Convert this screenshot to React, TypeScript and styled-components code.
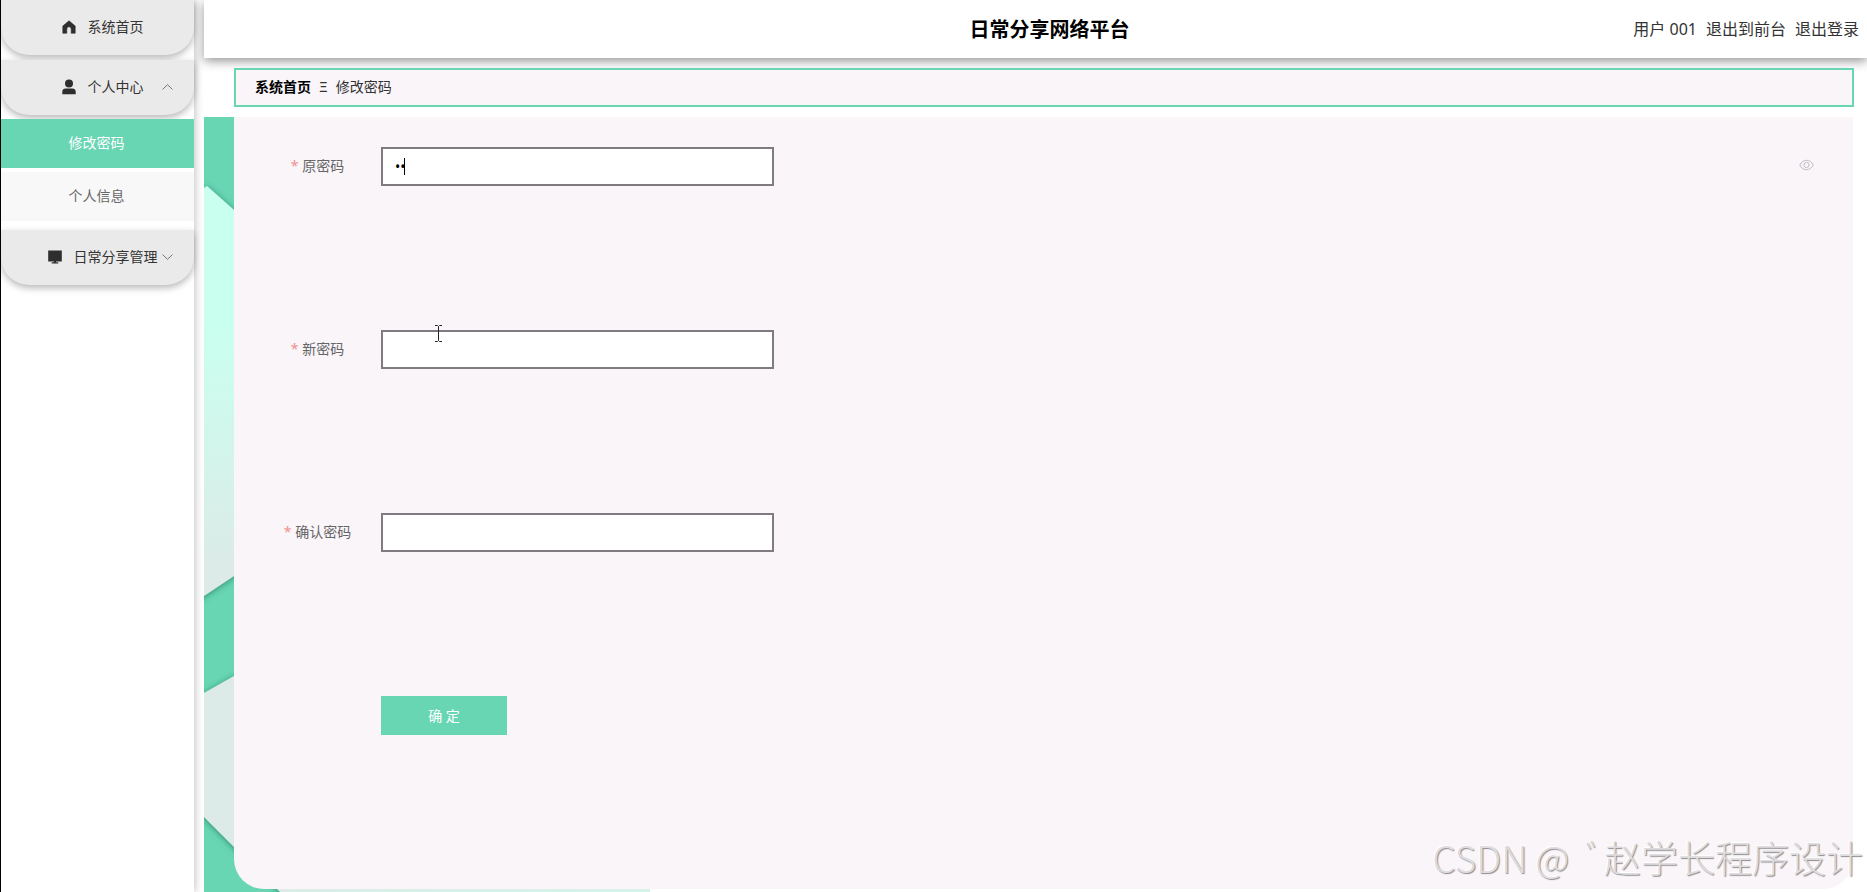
import React, { useState } from "react";
import styled, { createGlobalStyle } from "styled-components";

const green = "#68d5b3";

const GlobalStyle = createGlobalStyle`
  * { box-sizing: border-box; }
  body {
    margin: 0;
    background: #fff;
    color: #333;
    font: 14px/20px "Noto Sans", "Noto Sans CJK SC", sans-serif;
  }
  button, input { font: inherit; color: inherit; }
  a { color: inherit; text-decoration: none; }
`;

const Page = styled.div`
  position: relative;
  display: flex;
  gap: 10px;
  min-height: 100vh;
  overflow: hidden;
  border-left: 1px solid #000;
`;

const Sidebar = styled.nav`
  flex: 0 0 193px;
  background: #fff;
  box-shadow: 1px 0 8px rgba(0, 0, 0, 0.25);
`;

const MenuButton = styled.button<{ $gap: number }>`
  position: relative;
  display: flex;
  align-items: center;
  justify-content: center;
  gap: 12px;
  width: 100%;
  height: 55px;
  margin: 0 0 ${(p) => p.$gap}px;
  padding: 0 0 2px 10px;
  border: 0;
  border-radius: 0 0 28px 28px;
  background: #ebeaeb;
  box-shadow: 0 3px 7px rgba(0, 0, 0, 0.28);
  cursor: pointer;
`;

const Arrow = styled.svg`
  position: absolute;
  right: 21px;
  width: 11px;
  height: 6px;
  fill: none;
  stroke: #777;
`;

const SubMenu = styled.div`
  display: flex;
  flex-direction: column;
  gap: 4px;
  padding-bottom: 9px;
  position: relative;
  background: #fff;
`;

const SubLink = styled.a<{ $active?: boolean }>`
  height: 49px;
  padding-right: 2px;
  line-height: 47px;
  text-align: center;
  color: ${(p) => (p.$active ? "#fff" : "#666")};
  background: ${(p) => (p.$active ? green : "#f8f8f8")};
`;

const Main = styled.div`
  flex: 1;
  min-width: 0;
  display: flex;
  flex-direction: column;
`;

const Header = styled.header`
  display: grid;
  grid-template-columns: 1fr auto 1fr;
  align-items: center;
  height: 58px;
  padding: 0 8px;
  box-shadow: 0 3px 10px rgba(0, 0, 0, 0.42);
  background: #fff;
`;

const Title = styled.h1`
  grid-column: 2;
  margin: 0;
  padding: 2px 0 0 28px;
  font-size: 20px;
  line-height: 28px;
  color: #000;
`;

const UserBar = styled.div`
  display: flex;
  justify-content: flex-end;
  gap: 9px;
  font-size: 16px;
  line-height: 24px;
`;

const Breadcrumb = styled.nav`
  display: flex;
  align-items: center;
  gap: 8px;
  height: 39px;
  margin: 10px 13px 10px 30px;
  padding: 0 19px 2px;
  border: 2px solid ${green};
  background: #f9f5f9;
  position: relative;
`;

const Home = styled.a`
  font-weight: 700;
  color: #000;
`;

const Stage = styled.main`
  position: relative;
  flex: 1;
  display: flex;
  padding: 0 14px 3px 30px;
`;

const Backdrop = styled.svg`
  position: absolute;
  left: 0;
  top: 0;
  width: 446px;
  height: 100%;
`;

const Form = styled.form`
  position: relative;
  flex: 1;
  display: flex;
  flex-direction: column;
  gap: 144px;
  padding: 30px 39px 30px 20px;
  border-radius: 0 0 30px 30px;
  background: #f9f5f9;
`;

const Row = styled.div`
  display: flex;
  align-items: center;
  height: 39px;
`;

const Label = styled.label`
  flex: 0 0 127px;
  padding-bottom: 2px;
  text-align: center;
  color: #666;
`;

const Star = styled.span`
  margin-right: 4px;
  color: #f29090;
`;

const Field = styled.div`
  position: relative;
  flex: 0 1 393px;
`;

const Input = styled.input`
  display: block;
  width: 100%;
  height: 39px;
  padding: 0 12px 1px;
  border: 2px solid #807b80;
  border-radius: 0;
  background: #fff;
  color: #000;
  outline: none;
`;

const Caret = styled.span`
  position: absolute;
  left: 23px;
  top: 11px;
  width: 1px;
  height: 17px;
  background: #000;
`;

const Pointer = styled.svg`
  position: absolute;
  left: 53px;
  top: -5px;
  width: 9px;
  height: 17px;
  fill: none;
  stroke: #222;
  stroke-width: 1;
`;

const EyeButton = styled.button`
  display: flex;
  margin-left: auto;
  padding: 0 0 3px;
  border: 0;
  background: none;
  cursor: pointer;
`;

const Submit = styled.button`
  width: 126px;
  height: 39px;
  margin-left: 127px;
  padding: 0;
  border: 0;
  color: #fff;
  background: ${green};
  cursor: pointer;
`;

const Watermark = styled.div`
  position: absolute;
  right: 4px;
  bottom: 8px;
  font: 300 37px/54px "Noto Sans CJK SC", sans-serif;
  color: #dedcde;
  text-shadow: 1px 1px 1px #8e8c8e, -1px -1px 1px #fff;
  white-space: pre;
  pointer-events: none;
`;

const HomeIcon = () => (
  <svg width="14" height="14" viewBox="0 0 14 14" fill="#2e2e2e" aria-hidden="true">
    <path d="M7 .8 13.2 6v7.2H9.2V9a2.2 2.2 0 0 0-4.4 0v4.2H.8V6Z" stroke="#2e2e2e" strokeWidth=".6" strokeLinejoin="round" />
  </svg>
);

const UserIcon = () => (
  <svg width="14" height="16" viewBox="0 0 14 16" fill="#2e2e2e" aria-hidden="true">
    <circle cx="7" cy="4.6" r="4" />
    <path d="M.3 15.2v-2.4c0-2 1.5-3.2 3.4-3.2h6.6c1.900 0 3.400 1.200 3.400 3.200v2.400Z" />
  </svg>
);

const MonitorIcon = () => (
  <svg width="14" height="14" viewBox="0 0 14 14" fill="#2e2e2e" aria-hidden="true">
    <path d="M.2.600h13.600v10.800H.2ZM6 11.300h2v.9h2.300v1.300H3.700v-1.300H6Z" />
  </svg>
);

const Fold = ({ open }: { open?: boolean }) => (
  <Arrow viewBox="0 0 11 6" aria-hidden="true">
    <path d={open ? "M.5 5.500 5.500.700 10.500 5.500" : "M.5.500 5.500 5.300 10.500.500"} />
  </Arrow>
);

const EyeIcon = () => (
  <svg width="15" height="12" viewBox="0 0 15 12" fill="none" stroke="#c0bcc3" aria-hidden="true">
    <path d="M.7 6C2.300 3 4.600 1.300 7.500 1.300S12.700 3 14.300 6C12.700 9 10.400 10.700 7.500 10.700S2.300 9 .7 6Z" />
    <circle cx="7.500" cy="6" r="2.600" />
  </svg>
);

const Ribbons = () => (
  <Backdrop aria-hidden="true">
    <defs>
      <linearGradient id="mint" gradientUnits="userSpaceOnUse" x1="0" y1="210" x2="0" y2="450">
        <stop offset="0" stopColor="#c9ffef" />
        <stop offset="1" stopColor="#dcebe7" />
      </linearGradient>
      <linearGradient id="base" x1="0" x2="1">
        <stop offset="0.170" stopColor="#dcebe7" />
        <stop offset="1" stopColor="#d6f3ea" />
      </linearGradient>
      <filter id="fold" x="-50%" y="-10%" width="200%" height="120%">
        <feDropShadow dx="0" dy="1" stdDeviation="3" floodColor="#1c6b52" floodOpacity=".7" />
      </filter>
    </defs>
    <rect width="100%" height="100%" fill={green} />
    <g filter="url(#fold)">
      <path d="M-20 85 0 71 3 69 30 93 60 119V442L30 459 0 479-20 492Z" fill="url(#mint)" />
      <path d="M-20 588 0 576 30 559 446 559V800H102L73 772 30 730 0 700-20 680Z" fill="url(#base)" />
    </g>
  </Backdrop>
);

const fields = [
  { id: "old", label: "原密码" },
  { id: "new", label: "新密码" },
  { id: "confirm", label: "确认密码" },
];

export default function App() {
  const [values, setValues] = useState<Record<string, string>>({ old: "00" });

  return (
    <>
      <GlobalStyle />
      <Page>
        <Sidebar>
          <MenuButton $gap={5}>
            <HomeIcon />
            系统首页
          </MenuButton>
          <MenuButton $gap={4} aria-expanded="true">
            <UserIcon />
            个人中心
            <Fold open />
          </MenuButton>
          <SubMenu>
            <SubLink href="#password" $active>修改密码</SubLink>
            <SubLink href="#profile">个人信息</SubLink>
          </SubMenu>
          <MenuButton $gap={0} aria-expanded="false">
            <MonitorIcon />
            日常分享管理
            <Fold />
          </MenuButton>
        </Sidebar>
        <Main>
          <Header>
            <Title>日常分享网络平台</Title>
            <UserBar>
              <span>用户 001</span>
              <a href="#front">退出到前台</a>
              <a href="#logout">退出登录</a>
            </UserBar>
          </Header>
          <Breadcrumb>
            <Home href="#home">系统首页</Home>
            <span>Ξ</span>
            <span>修改密码</span>
          </Breadcrumb>
          <Stage>
            <Ribbons />
            <Form onSubmit={(e) => e.preventDefault()}>
              {fields.map((f) => (
                <Row key={f.id}>
                  <Label htmlFor={f.id}>
                    <Star>*</Star>
                    {f.label}
                  </Label>
                  <Field>
                    <Input
                      id={f.id}
                      type="password"
                      autoComplete="off"
                      value={values[f.id] ?? ""}
                      onChange={(e) => setValues({ ...values, [f.id]: e.target.value })}
                    />
                    {f.id === "old" && <Caret />}
                    {f.id === "new" && (
                      <Pointer viewBox="0 0 9 17" aria-hidden="true">
                        <path d="M1 .5H3.500L4.500 1.500 5.500.500H8M4.500 1.500V15.500M1 16.500H3.500L4.500 15.500 5.500 16.500H8" />
                      </Pointer>
                    )}
                  </Field>
                  {f.id === "old" && (
                    <EyeButton type="button" aria-label="显示密码">
                      <EyeIcon />
                    </EyeButton>
                  )}
                </Row>
              ))}
              <Submit type="submit">确 定</Submit>
            </Form>
          </Stage>
        </Main>
        <Watermark>CSDN @  ﾞ赵学长程序设计</Watermark>
      </Page>
    </>
  );
}
